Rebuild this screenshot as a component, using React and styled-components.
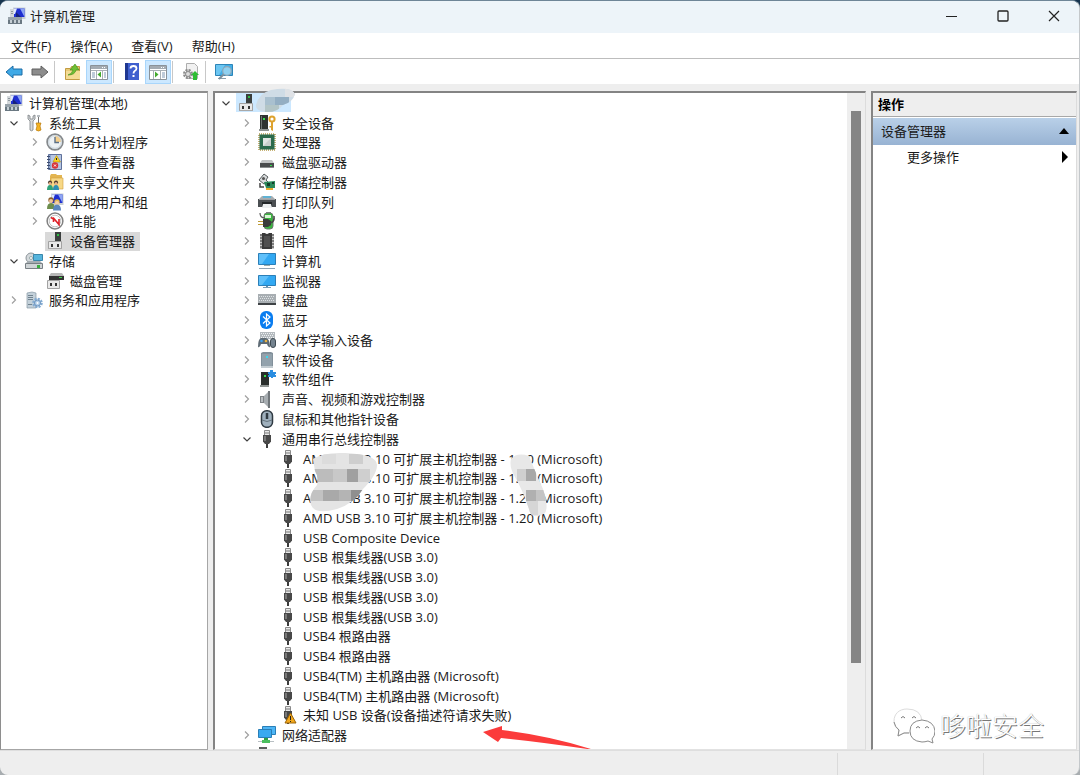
import React from 'react';
import styled, { createGlobalStyle, css } from 'styled-components';

const Global = createGlobalStyle`
  * { box-sizing: border-box; }
  html, body { margin: 0; padding: 0; }
  body {
    background: linear-gradient(#16344f, #5c7286 25%, #a8adb0);
    font-family: "Open Sans", "Noto Sans CJK SC", sans-serif;
    font-size: 13px;
    line-height: 18px;
    color: #1a1a1a;
  }
  button {
    font: inherit;
    color: inherit;
    background: none;
    border: 0;
    padding: 0;
    margin: 0;
  }
  ul { list-style: none; margin: 0; padding: 0; }
  h2, p { margin: 0; font: inherit; }
`;

const Window = styled.div`
  display: flex;
  flex-direction: column;
  height: 100vh;
  min-height: 700px;
  background: #eeeeee;
  border-top: 1px solid #6e8597;
  border-right: 1px solid #c4c8cb;
  border-radius: 8px;
  overflow: hidden;
`;

const TitleBar = styled.header`
  display: flex;
  align-items: center;
  height: 32px;
  flex: none;
  padding: 0 0 2px 8px;
  background: #edf4f9;
`;

const Title = styled.div`
  flex: 1;
  padding-left: 4px;
  color: #1c1c1c;
`;

const CaptionButton = styled.button`
  display: flex;
  align-items: center;
  justify-content: center;
  width: 51px;
  height: 30px;
`;

const MenuBar = styled.nav`
  display: flex;
  flex: none;
  gap: 19px;
  height: 26px;
  padding: 0 11px;
  background: #fff;
  border-bottom: 1px solid #bdbdbd;
`;

const MenuButton = styled.button`
  white-space: nowrap;
`;

const ToolBar = styled.div`
  display: flex;
  flex: none;
  align-items: center;
  height: 25px;
  padding: 1px 0 0 1px;
  background: #fff;
`;

const ToolButton = styled.button`
  display: flex;
  align-items: center;
  justify-content: center;
  width: 26px;
  height: 24px;
  ${(p) => p.$on && css`
    background: #cce8ff;
    border: 1px solid #a9d6fb;
  `}
`;

const ToolDivider = styled.span`
  width: 1px;
  height: 22px;
  margin: 0 5px 0 1px;
  background: #c8c8c8;
`;

const Panes = styled.main`
  display: grid;
  grid-template-columns: 208px minmax(0, 1fr) 206px;
  flex: 1;
  min-height: 0;
  padding: 7px 2px 0 0;
  gap: 5px;
`;

const Pane = styled.section`
  position: relative;
  display: flex;
  min-width: 0;
  min-height: 0;
  background: #fff;
  border-style: solid;
  border-color: #848484 #dcdcdc #e2e2e2 #848484;
  border-width: ${(p) => (p.$thin ? '2px 1px 1px 1px' : '2px 1px 1px 2px')};
  ${(p) => p.$thin && css`border-color: #8e8e8e #a6a6a6 #a6a6a6 #8e8e8e;`}
  ${(p) => p.$column && css`flex-direction: column;`}
`;

const Tree = styled.ul`
  display: grid;
  grid-template-rows: repeat(33, minmax(0, 1fr)) 4px;
  flex: 1;
  min-width: 0;
  overflow: hidden;
  padding-left: ${(p) => p.$inset}px;
`;

const Node = styled.li`
  display: flex;
  align-items: center;
  min-width: 0;
  height: ${(p) => (p.$cut ? '20px' : 'auto')};
  padding-left: ${(p) => p.$depth * 21}px;
`;

const Twisty = styled.button`
  display: flex;
  align-items: center;
  justify-content: center;
  flex: none;
  width: 20px;
  height: 18px;
`;

const TwistySpace = styled.span`
  flex: none;
  width: 20px;
`;

const NodeLabel = styled.span`
  display: flex;
  align-items: center;
  gap: 6px;
  height: 19px;
  min-width: ${(p) => (p.$blank ? '55px' : '0')};
  padding: 0 5px 0 1px;
  white-space: nowrap;
  background: ${(p) => p.$mark || 'transparent'};
`;

const ScrollTrack = styled.div`
  flex: none;
  width: 18px;
  padding: 18px 4px 86px;
  background: #eeeeee;
`;

const ScrollThumb = styled.div`
  height: 100%;
  background: #858585;
`;

const Overlay = styled.svg`
  position: absolute;
  pointer-events: none;
  left: ${(p) => p.$x}px;
  top: ${(p) => p.$y}px;
`;

const ActionsHeading = styled.h2`
  height: 24px;
  padding: 2px 5px;
  background: #eeeeee;
  border-bottom: 1px solid #a8a8a8;
  font-weight: 700;
  color: #000;
`;

const ActionGroup = styled.button`
  display: flex;
  align-items: center;
  justify-content: space-between;
  height: 28px;
  padding: 0 7px 2px 8px;
  border-top: 1px solid #fff;
  background: linear-gradient(#b9d0e8, #98b3d3);
`;

const ActionItem = styled.button`
  display: flex;
  align-items: center;
  justify-content: space-between;
  height: 26px;
  padding: 0 7px 2px 34px;
`;

const Watermark = styled.div`
  position: absolute;
  right: 32px;
  bottom: 5px;
  display: flex;
  align-items: center;
  gap: 5px;
  font-size: 26px;
  line-height: 36px;
  font-weight: 300;
  color: #fff;
  text-shadow: 1px 1px 0 #777, 0 0 1px #aaa;
`;

const StatusBar = styled.footer`
  display: grid;
  grid-template-columns: minmax(0, 1fr) 146px 95px;
  flex: none;
  height: 25px;
  border-top: 1px solid #dedede;
`;

const StatusCell = styled.div`
  margin-top: 2px;
  border-right: 1px solid #dadada;
  &:last-child { border-right: 0; }
`;

/* ---------- icons, all on an 18 x 18 grid ---------- */

const Icon = ({ children }) => (
  <svg width="18" height="18" viewBox="0 0 18 18" aria-hidden="true">
    {children}
  </svg>
);

const screen = (
  <>
    <path d="M5 .5h12.500v11.500H5z" fill="#c9cfd4" />
    <path d="M6 1.500h10.500v8.500H6z" fill="#1f2fd0" />
    <path d="M12 1.500h4.500V10z" fill="#8ea6f4" />
    <path d="M6 1.500h3L7 7H6z" fill="#dfe8ff" />
  </>
);

const Warn = () => (
  <>
    <path d="M11.500 7L17 17H6z" fill="#f3a81c" stroke="#9a6408" strokeWidth="1" strokeLinejoin="round" />
    <path d="M11 10h1v4h-1zM11 15h1v1h-1z" fill="#222" />
  </>
);

const usb = (
  <>
    <path d="M6.500 .5h5v5h-5z" fill="#e9e9e9" stroke="#8b8b8b" />
    <path d="M7.500 2h1v2h-1zM9.500 2h1v2h-1z" fill="#777" />
    <path d="M5 5h8v6.500L11 14H7l-2-2.500z" fill="#484848" />
    <path d="M6 6h2v5H6z" fill="#787878" />
    <path d="M8 14h2v4H8z" fill="#3c3c3c" />
  </>
);

const plugBox = (
  <>
    <path d="M2.500 9.500h13v7h-13z" fill="#e9e9e9" stroke="#a2a2a2" />
    <path d="M2 16h14v1H2z" fill="#a9a9a9" />
    <path d="M5 12h2v3H5zM11 12h2v3h-2z" fill="#333" />
  </>
);

const ICONS = {
  mmc: (
    <>
      {screen}
      <path d="M2 2h4v8H2z" fill="#d4d8db" />
      <path d="M3 4h2v1H3zM3 6h2v1H3z" fill="#8d979e" />
      <path d="M8 5l5 5H8z" fill="#16227a" />
      <path d="M0 10h14v4H0z" fill="#97a2aa" />
      <path d="M0 13h14v4H0z" fill="#6a7882" />
      <path d="M2 13h2v3H2zM6 13h2v3H6zM10 13h2v3h-2z" fill="#c5ced4" />
    </>
  ),
  tools: (
    <>
      <path d="M3 1v4l2 2v9a2 2 0 0 0 3 0V7l2-2V1L8 2v3H5V2z" fill="#d7dadc" stroke="#7b8084" strokeWidth=".8" />
      <path d="M13 1h1v8h-1z" fill="#777" />
      <path d="M11 9h5l-1 3 1 4q-2.500 2-5 0l1-4z" fill="#f4b323" stroke="#b97908" strokeWidth=".7" />
      <path d="M12 1h3v2h-3z" fill="#b9bec2" />
    </>
  ),
  clock: (
    <>
      <circle cx="9" cy="9" r="7.900" fill="#eef2f5" stroke="#85898c" strokeWidth="1.700" />
      <path d="M9 9V2.500A6.500 6.500 0 0 1 15.500 9z" fill="#f5cf8d" />
      <circle cx="9" cy="9" r="6.300" fill="none" stroke="#c9d5de" />
      <path d="M9 4v5.500h4" fill="none" stroke="#5b7087" strokeWidth="1.400" />
    </>
  ),
  event: (
    <>
      <path d="M2.500 1.500h13v15h-13z" fill="#8fa5cd" stroke="#5f719a" />
      <path d="M5 2h10v14H5z" fill="#b6c6e2" />
      <path d="M1 3h3v1H1zM1 6h3v1H1zM1 9h3v1H1zM1 12h3v1H1zM1 15h3v1H1z" fill="#3e4d70" />
      <path d="M10.500 2.500l4 6.500H7z" fill="#ffd51d" stroke="#b08c09" strokeWidth=".6" />
      <path d="M10 5h1v2h-1z" fill="#222" />
      <circle cx="9" cy="12.500" r="3.200" fill="#d8343a" />
      <path d="M8 11.500l2 2m0-2l-2 2" stroke="#fff" />
    </>
  ),
  share: (
    <>
      <path d="M4 3l1-2h5l1 1h5v13H4z" fill="#e3b551" />
      <path d="M5 5h12v11H5z" fill="#f7d886" stroke="#d1a03c" strokeWidth=".6" />
      <circle cx="4" cy="9.500" r="2" fill="#4b3a2e" />
      <circle cx="10" cy="9.500" r="2" fill="#4b3a2e" />
      <circle cx="4" cy="10.500" r="1.500" fill="#e9b48b" />
      <circle cx="10" cy="10.500" r="1.500" fill="#e9b48b" />
      <path d="M1 17q0-5 3-5t3 5z" fill="#2fa37a" />
      <path d="M7 17q0-5 3-5t3 5z" fill="#2c8fb4" />
    </>
  ),
  users: (
    <>
      {screen}
      <circle cx="5" cy="7" r="2.700" fill="#8b5f2d" />
      <circle cx="5" cy="8" r="2" fill="#efc39b" />
      <path d="M1 16q0-6 4-6t4 6z" fill="#6d8d4c" />
      <circle cx="11" cy="9" r="2.700" fill="#e0b84d" />
      <circle cx="11" cy="10" r="2" fill="#f3cda8" />
      <path d="M7 17.500q0-6 4-6t4 6z" fill="#5a86be" />
    </>
  ),
  perf: (
    <>
      <circle cx="9" cy="9" r="7.900" fill="#fff" stroke="#808080" strokeWidth="1.500" />
      <circle cx="9" cy="9" r="5.800" fill="none" stroke="#c4c4c4" />
      <path d="M5 5.500l2.500 1.500v3M7 5.500l6 7V7" fill="none" stroke="#e01f26" strokeWidth="1.600" />
    </>
  ),
  device: (
    <>
      <path d="M9 0h6v9H9z" fill="#3b3f3e" />
      <path d="M11 2h2v2h-2z" fill="#2fbe44" />
      {plugBox}
    </>
  ),
  storage: (
    <>
      <ellipse cx="6" cy="6" rx="5" ry="5" fill="#d3d8db" stroke="#8c9499" />
      <circle cx="6" cy="6" r="1.500" fill="#fff" stroke="#9aa" />
      <path d="M8.500 2.500h9v6h-9z" fill="#55b4dc" stroke="#3a87ab" />
      <path d="M.5 11.500h17v5H.5z" fill="#cfd4d6" stroke="#787f84" />
      <path d="M1 11l2-2h12l2 2z" fill="#a5adb2" />
      <path d="M12 13h3v3h-3z" fill="#3aae3f" />
    </>
  ),
  diskmgmt: (
    <>
      <path d="M3 4l2-3h11l2 3z" fill="#b8b8b8" />
      <path d="M3 4h15v4H3z" fill="#333" />
      <path d="M13 5h3v1h-3z" fill="#3fd24b" />
      <path d="M1.500 8.500h12v8h-12z" fill="#e9e9e9" stroke="#a2a2a2" />
      <path d="M4 11h2v3H4zM9 11h2v3H9z" fill="#333" />
    </>
  ),
  services: (
    <>
      <path d="M2 2l5-1 4 1v15H2z" fill="#c3d0d9" stroke="#8698a5" strokeWidth=".7" />
      <path d="M3 4h5v1H3zM3 6h5v1H3zM3 8h5v1H3zM3 13h4v1H3z" fill="#71838f" />
      <circle cx="12.500" cy="12" r="4" fill="none" stroke="#85acd2" strokeWidth="2.600" strokeDasharray="2 1.100" />
      <circle cx="12.500" cy="12" r="3" fill="#b5d0ea" stroke="#6d95bf" />
      <circle cx="12.500" cy="12" r="1" fill="#fff" />
    </>
  ),
  security: (
    <>
      <path d="M2 1h8v15H2z" fill="#2f3331" />
      <path d="M3 2h1v13H3z" fill="#6f7573" />
      <path d="M5 4h2v2H5z" fill="#37e04d" />
      <path d="M1 15h10v2H1z" fill="#8f9492" />
      <circle cx="14" cy="5" r="2.600" fill="none" stroke="#dda22e" strokeWidth="2" />
      <path d="M13 7h2v10l-2-1zM11.500 12h2v1.500h-2z" fill="#dda22e" />
    </>
  ),
  cpu: (
    <>
      <path d="M1 1h16v16H1z" fill="none" stroke="#b59a4a" strokeWidth="1.500" strokeDasharray="1 1" />
      <path d="M1.500 1.500h15v15h-15z" fill="#2c6b4d" />
      <path d="M5 5h8v8H5z" fill="#e1e5e3" />
      <path d="M5 13l8-8v8z" fill="#c9cfcc" />
    </>
  ),
  disk: (
    <>
      <path d="M2 10l2-3h10l2 3z" fill="#c2c4c5" />
      <path d="M2 10h14v5H2z" fill="#4a4c4d" />
      <path d="M2 14h14v1H2z" fill="#8c8e8f" />
      <path d="M12 12h2v1h-2z" fill="#34df4c" />
    </>
  ),
  storagectl: (
    <>
      <path d="M6 1l4 3-2 3 2 2-4 2-5-4z" fill="#d8dbdc" stroke="#565b5d" />
      <circle cx="5.500" cy="5.500" r="1.500" fill="#555" />
      <path d="M2 10v4h4" fill="none" stroke="#444" strokeWidth="1.500" />
      <path d="M6 9l11-1v7H8z" fill="#2b8a5b" />
      <path d="M9 10h3v3H9zM14 9h2v2h-2z" fill="#123f2a" />
      <path d="M8 15h7v2H8z" fill="#e8a92a" />
    </>
  ),
  printer: (
    <>
      <path d="M4 3h10l3 3H1z" fill="#a8adb0" />
      <path d="M5 3h8v2H5z" fill="#5fb2d4" />
      <path d="M0 6h18v8H0z" fill="#4b4f52" />
      <path d="M1 6h16v1H1z" fill="#9da1a3" />
      <path d="M4 9h10v4H4z" fill="#24282a" />
      <path d="M5 11h8l1 4H4z" fill="#edf0f1" />
    </>
  ),
  battery: (
    <>
      <path d="M8 0h5v2H8z" fill="#888" />
      <rect x="6" y="1" width="9" height="16" rx="3" fill="#37b53d" stroke="#6e7a70" />
      <path d="M7 3h6v3H7z" fill="#d8f4d5" />
      <path d="M2 1q0 5 5 5" fill="none" stroke="#555" strokeWidth="1.200" />
      <path d="M0 9h5v1H0zM0 12h5v1H0z" fill="#bd9b34" />
      <path d="M5 7h5l3 2v4l-3 2H5z" fill="#3b3b3b" />
      <path d="M12 11q5-1 4-7" fill="none" stroke="#444" strokeWidth="1.500" />
    </>
  ),
  firmware: (
    <>
      <path d="M2 2h14v15H2z" fill="#c8c8c8" />
      <path d="M2 3h14M2 6h14M2 9h14M2 12h14M2 15h14" stroke="#333" />
      <path d="M4 1h3q2 2 4 0h3v16H4z" fill="#3b3b3b" />
      <path d="M6 4h6v11H6z" fill="#505050" />
    </>
  ),
  computer: (
    <>
      <path d="M.5 1.500h17v11H.5z" fill="#32a8f2" stroke="#2b7fb8" />
      <path d="M1 2h10L4 12H1z" fill="#5fc0fa" />
      <path d="M6 13h6v1H6z" fill="#9aa" />
      <path d="M1 16h16v1H1z" fill="#8ea2b3" />
    </>
  ),
  monitor: (
    <>
      <path d="M.5 3.500h17v10H.5z" fill="#32a8f2" stroke="#2b7fb8" />
      <path d="M1 4h10l-7 9H1z" fill="#5fc0fa" />
      <path d="M8 14h2v1H8z" fill="#5c8fb5" />
      <path d="M5 15h8v1H5z" fill="#7b9cb5" />
    </>
  ),
  keyboard: (
    <>
      <path d="M0 3h18v9H0z" fill="#a8aeb2" />
      <path d="M1 5.500h16M2 7.500h14M1 9.500h16" stroke="#dde2e5" strokeDasharray="1 1" />
      <path d="M0 12h18v2H0z" fill="#3f4346" />
    </>
  ),
  bluetooth: (
    <>
      <rect x="2" y="0" width="13" height="18" rx="6" fill="#0a7df0" />
      <path d="M5 5.500l7 6.500L8.500 15V3L12 6l-7 6.500" fill="none" stroke="#fff" strokeWidth="1.200" />
    </>
  ),
  hid: (
    <>
      <path d="M2 1h15v7H2z" fill="#b4babe" />
      <path d="M3 2.500h13M4 4.500h12M3 6.500h13" stroke="#eef1f3" strokeDasharray="1 1" />
      <path d="M0 16q0-8 3-9h5q4 1 4 9-2 1-3-3H3q-1 4-3 3z" fill="#5d6a74" />
      <circle cx="3.500" cy="10" r="1.300" fill="#3fa4f0" />
      <circle cx="8" cy="10" r="1.300" fill="#e8b443" />
      <rect x="12.500" y="7.500" width="5" height="9" rx="2.500" fill="#74838f" stroke="#3f4a52" />
    </>
  ),
  softdev: (
    <>
      <path d="M3 2l2-1h8l2 1v14H3z" fill="#82909a" />
      <path d="M4 3h10v12H4z" fill="#93a2ac" />
      <path d="M8 5h2v2H8z" fill="#3cd8ee" />
      <path d="M3 15h12v2H3z" fill="#c3ccd1" />
    </>
  ),
  softcomp: (
    <>
      <path d="M3 2h8v13H3z" fill="#2b2f2d" />
      <path d="M6 5h2v2H6z" fill="#37e04d" />
      <path d="M2 15h9v2H2z" fill="#8f9492" />
      <path d="M10 2h2V0h3v2h3v2h-1v1h1v2h-3v1h-2V7h-3V5h1V4h-1z" fill="#2b8de0" />
    </>
  ),
  sound: (
    <>
      <path d="M2 6h4v7H2z" fill="#7d8286" />
      <path d="M6 6l5-5v17l-5-5z" fill="#a7adb1" />
      <path d="M10 1h2v17h-2z" fill="#70767a" />
      <path d="M3 7h2v5H3z" fill="#b9bec1" />
    </>
  ),
  mouse: (
    <>
      <rect x="3.500" y=".8" width="11" height="16.500" rx="5" fill="#9fb0bd" stroke="#2f3a42" strokeWidth="1.500" />
      <path d="M9 3v6" stroke="#2f3a42" strokeWidth="2.500" />
      <path d="M4 10q5 3 10 0" fill="none" stroke="#66757f" />
    </>
  ),
  usb,
  usbwarn: (
    <>
      {usb}
      <Warn />
    </>
  ),
  network: (
    <>
      <path d="M4.500 .5h13v8h-13z" fill="#4db5f5" stroke="#2a7fb7" />
      <path d="M.5 3.500h13v8H.5z" fill="#39a9f0" stroke="#2a7fb7" />
      <path d="M6 12h4v2H6z" fill="#2e9e45" />
      <path d="M4 14h8v3H4z" fill="#4abf5e" />
      <path d="M0 15h4v1H0zM12 15h4v1h-4z" fill="#b8bfc3" />
    </>
  ),
  system: (
    <>
      <path d="M1 1h8v14H1z" fill="#5b605e" />
      <path d="M4 3h2v2H4z" fill="#37e04d" />
    </>
  ),
  back: (
    <path d="M1 9l7-6v3h9v6H8v3z" fill="#3fa9e6" stroke="#1c6ca6" strokeLinejoin="round" />
  ),
  forward: (
    <path d="M17 9l-7-6v3H1v6h9v3z" fill="#8d8d8d" stroke="#5e5e5e" strokeLinejoin="round" />
  ),
  folderUp: (
    <>
      <path d="M1.500 5.500h5l1-2h8v13h-14z" fill="#e9cb77" stroke="#c29b42" />
      <path d="M2 8h14v8H2z" fill="#f4dc95" />
      <path d="M4 12q4-1 5-5H6l5-6 4 6h-3q-1 5-8 5z" fill="#6fbf35" stroke="#3b8a16" strokeWidth=".6" />
    </>
  ),
  treePane: (
    <>
      <path d="M.5 2.500h17v14H.5z" fill="#fff" stroke="#8a9299" />
      <path d="M1 3h16v3H1z" fill="#a3abb2" />
      <path d="M12 4h1v1h-1zM14 4h1v1h-1z" fill="#fff" />
      <path d="M1 7.500h16M6.500 8v8M12.500 8v8" stroke="#a9b0b6" />
      <path d="M2 10h3M2 12h3M2 14h3M14 10h2M14 12h2M14 14h2" stroke="#7f97b3" />
      <path d="M11 8.500v6L7.500 11.500z" fill="#42a92b" />
    </>
  ),
  actionPane: (
    <>
      <path d="M.5 2.500h17v14H.5z" fill="#fff" stroke="#8a9299" />
      <path d="M1 3h16v3H1z" fill="#a3abb2" />
      <path d="M12 4h1v1h-1zM14 4h1v1h-1z" fill="#fff" />
      <path d="M1 7.500h16M4.500 8v8M11.500 8v8" stroke="#a9b0b6" />
      <path d="M13 10h3M13 12h3M13 14h3" stroke="#7f97b3" />
      <path d="M6 8.500v6l3.500-3z" fill="#42a92b" />
    </>
  ),
  help: (
    <>
      <path d="M2 0h14v17H2z" fill="#3f5fce" />
      <path d="M2 0h3v17H2z" fill="#1f3791" />
      <path d="M7.500 5.500q0-2.500 3-2.500t3 2.500q0 1.500-1.800 2.500-1.200 1-1.200 2.500" fill="none" stroke="#fff" strokeWidth="1.800" />
      <path d="M9.500 12h2v2h-2z" fill="#fff" />
    </>
  ),
  update: (
    <>
      <path d="M4.500 .5h8l3 3v12h-11z" fill="#f1f1f1" stroke="#adadad" />
      <circle cx="6" cy="11" r="3.800" fill="none" stroke="#8a8a8a" strokeWidth="2.500" strokeDasharray="2 1" />
      <circle cx="6" cy="11" r="2.500" fill="#ddd" stroke="#8a8a8a" />
      <path d="M13 8l4 4h-2v5h-4v-5H9z" fill="#2fbd35" />
    </>
  ),
  scan: (
    <>
      <path d="M.5 1.500h17v11H.5z" fill="#41aee8" stroke="#2d85b8" />
      <path d="M1 2h9l-6 10H1z" fill="#6cc6f2" />
      <path d="M3 15h8v1H3z" fill="#8aa0ae" />
      <path d="M9 11l-5 5" stroke="#7c8f9c" strokeWidth="2" />
      <circle cx="12" cy="8" r="4.300" fill="#8fd0f0" stroke="#90a8b8" strokeWidth="1.200" />
    </>
  ),
};

const Chevron = ({ open }) => (
  <svg width="10" height="10" viewBox="0 0 10 10" aria-hidden="true">
    {open ? (
      <path d="M1.500 3.500L5 7l3.500-3.500" fill="none" stroke="#404040" strokeWidth="1.200" />
    ) : (
      <path d="M3 1.500L6.500 5 3 8.500" fill="none" stroke="#a0a0a0" strokeWidth="1.200" />
    )}
  </svg>
);

/* [depth, icon, text, state, highlight] */
const CONSOLE = [
  [0, 'tools', '系统工具', 'open'],
  [1, 'clock', '任务计划程序', 'closed'],
  [1, 'event', '事件查看器', 'closed'],
  [1, 'share', '共享文件夹', 'closed'],
  [1, 'users', '本地用户和组', 'closed'],
  [1, 'perf', '性能', 'closed'],
  [1, 'device', '设备管理器', 'leaf', '#d9d9d9'],
  [0, 'storage', '存储', 'open'],
  [1, 'diskmgmt', '磁盘管理', 'leaf'],
  [0, 'services', '服务和应用程序', 'closed'],
];

const HOST = 'AMD USB 3.10 可扩展主机控制器 - 1.20 (Microsoft)';

const DEVICES = [
  [0, 'device', '', 'open', '#cce8ff'],
  [1, 'security', '安全设备', 'closed'],
  [1, 'cpu', '处理器', 'closed'],
  [1, 'disk', '磁盘驱动器', 'closed'],
  [1, 'storagectl', '存储控制器', 'closed'],
  [1, 'printer', '打印队列', 'closed'],
  [1, 'battery', '电池', 'closed'],
  [1, 'firmware', '固件', 'closed'],
  [1, 'computer', '计算机', 'closed'],
  [1, 'monitor', '监视器', 'closed'],
  [1, 'keyboard', '键盘', 'closed'],
  [1, 'bluetooth', '蓝牙', 'closed'],
  [1, 'hid', '人体学输入设备', 'closed'],
  [1, 'softdev', '软件设备', 'closed'],
  [1, 'softcomp', '软件组件', 'closed'],
  [1, 'sound', '声音、视频和游戏控制器', 'closed'],
  [1, 'mouse', '鼠标和其他指针设备', 'closed'],
  [1, 'usb', '通用串行总线控制器', 'open'],
  [2, 'usb', HOST, 'leaf'],
  [2, 'usb', HOST, 'leaf'],
  [2, 'usb', HOST, 'leaf'],
  [2, 'usb', HOST, 'leaf'],
  [2, 'usb', 'USB Composite Device', 'leaf'],
  [2, 'usb', 'USB 根集线器(USB 3.0)', 'leaf'],
  [2, 'usb', 'USB 根集线器(USB 3.0)', 'leaf'],
  [2, 'usb', 'USB 根集线器(USB 3.0)', 'leaf'],
  [2, 'usb', 'USB 根集线器(USB 3.0)', 'leaf'],
  [2, 'usb', 'USB4 根路由器', 'leaf'],
  [2, 'usb', 'USB4 根路由器', 'leaf'],
  [2, 'usb', 'USB4(TM) 主机路由器 (Microsoft)', 'leaf'],
  [2, 'usb', 'USB4(TM) 主机路由器 (Microsoft)', 'leaf'],
  [2, 'usbwarn', '未知 USB 设备(设备描述符请求失败)', 'leaf'],
  [1, 'network', '网络适配器', 'closed'],
  [1, 'system', '系统设备', 'cut'],
];

const TreeNode = ({ row: [depth, icon, text, state, mark] }) => (
  <Node $depth={depth} $cut={state === 'cut'}>
    {state === 'leaf' || state === 'cut' ? (
      <TwistySpace />
    ) : (
      <Twisty aria-label={state === 'open' ? '折叠' : '展开'}>
        <Chevron open={state === 'open'} />
      </Twisty>
    )}
    <NodeLabel $mark={mark} $blank={!text}>
      <Icon>{ICONS[icon]}</Icon>
      {text}
    </NodeLabel>
  </Node>
);

/* Pixelated patches that hide private names */
const Mosaic = ({ id, x, y, width, height, shape, base, cells }) => (
  <Overlay $x={x} $y={y} width={width} height={height} aria-hidden="true">
    <clipPath id={id}>
      <path d={shape} />
    </clipPath>
    <g clipPath={`url(#${id})`}>
      <rect width={width} height={height} fill={base} />
      {cells.map(([cx, cy, w, h, fill], i) => (
        <rect key={i} x={cx} y={cy} width={w} height={h} fill={fill} />
      ))}
    </g>
  </Overlay>
);

const TOOLS = [
  ['back', '后退'],
  ['forward', '前进'],
  null,
  ['folderUp', '上移一级'],
  ['treePane', '显示/隐藏控制台树', true],
  null,
  ['help', '帮助'],
  ['actionPane', '显示/隐藏操作窗格', true],
  null,
  ['update', '更新驱动程序'],
  null,
  ['scan', '扫描检测硬件改动'],
];

export default function App() {
  return (
    <>
      <Global />
      <Window>
        <TitleBar>
          <Icon>{ICONS.mmc}</Icon>
          <Title>计算机管理</Title>
          <CaptionButton aria-label="最小化">
            <svg width="12" height="12"><path d="M0 6.500h11" stroke="#222" /></svg>
          </CaptionButton>
          <CaptionButton aria-label="最大化">
            <svg width="12" height="12"><rect x="1" y="1" width="10" height="10" rx="1" fill="none" stroke="#222" strokeWidth="1.300" /></svg>
          </CaptionButton>
          <CaptionButton aria-label="关闭">
            <svg width="12" height="12"><path d="M1 1l10 10M11 1L1 11" stroke="#222" strokeWidth="1.200" /></svg>
          </CaptionButton>
        </TitleBar>

        <MenuBar>
          {['文件(F)', '操作(A)', '查看(V)', '帮助(H)'].map((m) => (
            <MenuButton key={m}>{m}</MenuButton>
          ))}
        </MenuBar>

        <ToolBar>
          {TOOLS.map((t, i) =>
            t ? (
              <ToolButton key={i} aria-label={t[1]} $on={t[2]}>
                <Icon>{ICONS[t[0]]}</Icon>
              </ToolButton>
            ) : (
              <ToolDivider key={i} />
            )
          )}
        </ToolBar>

        <Panes>
          <Pane $thin>
            <Tree $inset={3}>
              <Node $depth={0}>
                <NodeLabel>
                  <Icon>{ICONS.mmc}</Icon>
                  计算机管理(本地)
                </NodeLabel>
              </Node>
              {CONSOLE.map((row, i) => (
                <TreeNode key={i} row={row} />
              ))}
            </Tree>
          </Pane>

          <Pane>
            <Tree $inset={1}>
              {DEVICES.map((row, i) => (
                <TreeNode key={i} row={row} />
              ))}
            </Tree>
            <ScrollTrack>
              <ScrollThumb />
            </ScrollTrack>
            <Mosaic
              id="root-name" x={38} y={-5} width={44} height={26} base="#cfdce6"
              shape="M3 17Q6 5 18 2Q38-2 42 6Q40 14 30 17Q24 25 12 24Q2 22 3 17z"
              cells={[[12, 9, 10, 8, '#a9c0cf'], [22, 9, 14, 8, '#93aec3'], [12, 17, 14, 8, '#b3c5c6'], [32, 0, 12, 9, '#dfe2e6']]}
            />
            <Mosaic
              id="host-name" x={94} y={358} width={74} height={64} base="#e4e4e4"
              shape="M4 8Q14 1 36 2Q68 3 68 14Q68 24 54 38Q46 52 28 58Q6 64 2 54Q-1 44 8 34Q10 26 6 20z"
              cells={[[13, 3, 14, 10, '#dcdcdc'], [40, 3, 14, 10, '#cecece'], [4, 18, 20, 13, '#bcbcbc'], [24, 18, 14, 13, '#c8c8c8'], [38, 18, 11, 13, '#a0a0a0'], [49, 18, 12, 13, '#cfcfcf'], [0, 39, 14, 11, '#c2c2c2'], [14, 39, 16, 11, '#a9a9a9'], [30, 39, 12, 11, '#b4b4b4'], [42, 39, 14, 11, '#8f8f8f']]}
            />
            <Mosaic
              id="host-version" x={294} y={358} width={42} height={70} base="#e8e8e8"
              shape="M2 8Q8 1 20 5Q26 20 34 38Q40 56 36 62Q22 70 20 58Q14 40 6 26Q0 16 2 8z"
              cells={[[8, 18, 9, 12, '#cfcfcf'], [17, 18, 10, 12, '#a8a8a8'], [17, 39, 10, 11, '#b0b0b0'], [27, 39, 12, 11, '#c4c4c4'], [17, 50, 12, 14, '#d6d6d6']]}
            />
            <Overlay $x={266} $y={631} width={116} height={25} aria-hidden="true">
              <path d="M2 8L21 2v4Q70 12 113 26Q60 18 20 14L17 18z" fill="#fb3b3b" />
            </Overlay>
          </Pane>

          <Pane $column>
            <ActionsHeading>操作</ActionsHeading>
            <ActionGroup>
              设备管理器
              <svg width="10" height="6"><path d="M0 6l5-6 5 6z" fill="#000" /></svg>
            </ActionGroup>
            <ActionItem>
              更多操作
              <svg width="8" height="12"><path d="M1 0l6 6-6 6z" fill="#000" /></svg>
            </ActionItem>
            <Watermark>
              <svg width="42" height="36" viewBox="0 0 42 36" aria-hidden="true">
                <path d="M14 1C6 1 1 6 1 13q0 6 5 9l-1 6 6-3q16 1 18-12Q28 1 14 1z" fill="#fff" stroke="#dcdcdc" />
                <path d="M1 14q1 5 5 8l-1 6 6-3h5" fill="none" stroke="#8b8b8b" />
                <path d="M29 12q-12 1-12 11t12 11q3 0 6-1l5 2-1-4q3-3 3-8-1-10-13-11z" fill="#fff" stroke="#8b8b8b" />
                <path d="M8 10q2-3 4 0M19 10q2-3 4 0M23 20q2-3 4 0M32 20q2-3 4 0" fill="none" stroke="#777" />
              </svg>
              哆啦安全
            </Watermark>
          </Pane>
        </Panes>

        <StatusBar>
          <StatusCell />
          <StatusCell />
          <StatusCell />
        </StatusBar>
      </Window>
    </>
  );
}
